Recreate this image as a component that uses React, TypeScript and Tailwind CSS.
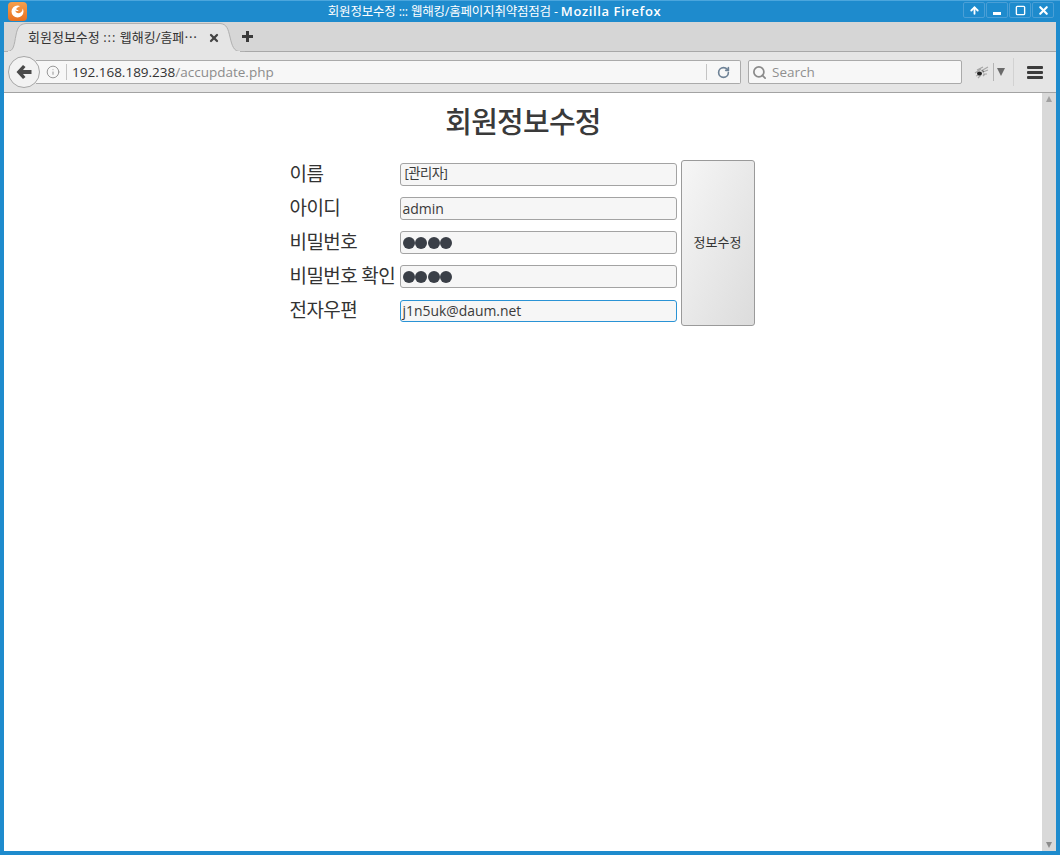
import React from 'react';
import { Info, RotateCw, Search, X, ArrowUp, Square } from 'lucide-react';

const sans = "font-['Open_Sans','Noto_Sans_CJK_KR',sans-serif]";

const fields = [
  { label: '이름', value: '[관리자]', pad: 'pl-[4px] pb-[2px] text-[13.300px] tracking-[-0.5px]' },
  { label: '아이디', value: 'admin', pad: 'pl-[2px] text-[14px]' },
  { label: '비밀번호', dots: true },
  { label: '비밀번호 확인', dots: true },
  { label: '전자우편', value: 'j1n5uk@daum.net', focus: true, pad: 'pl-[2px] text-[13.900px]' },
];

const App: React.FC = () => {
  return (
    <div className={`w-[1060px] h-[855px] flex flex-col bg-[#1e8bcd] overflow-hidden ${sans}`}>
      {/* Title bar */}
      <div className="h-[22px] flex items-center shrink-0 pl-[8px] pr-[6px] border-t border-[#4ba6dd]">
        <div className="w-[19px] h-[19px] rounded-[4px] bg-gradient-to-b from-[#f6a04c] to-[#e8701f] flex items-center justify-center">
          <svg width="15" height="15" viewBox="0 0 15 15">
            <path d="M7.500 1.500a6 6 0 1 0 6 6c0-1.200-.4-2.100-.9-2.900.1 2.400-1.500 4.500-4 4.600-1.700 0-3.100-1-3.400-2.600 1.200.8 2.800.6 3.600-.4-1.200.2-2.200-.2-2.600-1.100C7 3.700 8.800 2.500 10.300 2.300 9.500 1.800 8.600 1.500 7.500 1.500z" fill="#fff" />
          </svg>
        </div>
        <div className="flex-1 text-center text-white text-[12.500px] leading-[18px] tracking-[-0.2px] mr-[1px]">
          회원정보수정 ::: 웹해킹/홈페이지취약점점검 - <span className="text-[13px] font-semibold tracking-[0.6px]">Mozilla Firefox</span>
        </div>
        <div className="flex gap-px mt-[-3px]">
          <div className="w-[22px] h-[16px] rounded-[2px] border border-[#4a9fd6] flex items-center justify-center">
            <ArrowUp size={11} strokeWidth={4} className="text-white" />
          </div>
          <div className="w-[22px] h-[16px] rounded-[2px] border border-[#4a9fd6] flex items-end justify-center pb-[2px]">
            <div className="w-[8px] h-[3px] bg-white" />
          </div>
          <div className="w-[22px] h-[16px] rounded-[2px] border border-[#4a9fd6] flex items-center justify-center">
            <Square size={11} strokeWidth={3} className="text-white" />
          </div>
          <div className="w-[22px] h-[16px] rounded-[2px] border border-[#4a9fd6] flex items-center justify-center">
            <X size={13} strokeWidth={4} className="text-white" />
          </div>
        </div>
      </div>

      <div className="flex-1 ml-[4px] mr-[4px] mb-[4px] flex flex-col min-h-0 bg-white">
        {/* Tab strip */}
        <div className="h-[30px] bg-[#d6d6d6] shrink-0 flex items-end border-b border-[#a8a8a8]">
          <div className="relative w-[241px] h-[29px] mb-[-1px] flex items-center pl-[24px] pr-[25px] text-[13px] text-[#333]">
            <svg width="241" height="29" viewBox="0 0 241 29" className="absolute left-0 top-0">
              <path d="M0 28.500 H3 C10 28.500 10 22 12 12 C13.500 4 16 1 22 .500 H216 C223 1 224 6 226 14 C228 23 230 28.500 236 28.500 H241" fill="#e5e5e5" stroke="#b0b0b0" />
              <rect x="4" y="28" width="232" height="1" fill="#e5e5e5" />
            </svg>
            <span className="relative flex-1 whitespace-nowrap overflow-hidden">
              회원정보수정 <span className="tracking-[1px]">:::</span> 웹해킹/홈페⋯
            </span>
            <X size={12} strokeWidth={4.500} className="relative text-[#444] shrink-0" />
          </div>
          <div className="h-[29px] flex items-center ml-[-3px]">
            <svg width="11" height="11" viewBox="0 0 11 11">
              <path d="M4 0h3v4h4v3H7v4H4V7H0V4h4z" fill="#3a3a3a" />
            </svg>
          </div>
        </div>

        {/* Nav bar */}
        <div className="h-[41px] bg-[#e5e5e5] shrink-0 flex items-center border-b border-[#a3a3a3] pl-[4px] pr-[6px]">
          <div className="relative z-10 w-[32px] h-[32px] rounded-full border border-[#a6a6a6] bg-[#f2f2f2] flex items-center justify-center shrink-0">
            <svg width="16" height="14" viewBox="0 0 16 14">
              <path d="M7 0 L0.500 7 L7 14 L9.500 12 L7 9 H15.500 V5 H7 L9.500 2 Z" fill="#4a4a4a" />
            </svg>
          </div>
          <div className="ml-[-4px] w-[705px] h-[24px] bg-[#f7f7f7] border border-l-0 border-[#aaaaaa] rounded-r-[2px] flex items-center pl-[10px] text-[13.500px] shrink-0">
            <Info size={14} strokeWidth={1.500} className="text-[#8a8a8a] shrink-0" />
            <div className="w-px h-[16px] bg-[#c4c4c4] ml-[6px] mr-[5px]" />
            <span className="flex-1 text-[#333] pt-px">192.168.189.238<span className="text-[#8c8c8c]">/accupdate.php</span></span>
            <div className="w-px h-[16px] bg-[#c4c4c4]" />
            <div className="w-[33px] flex justify-center">
              <RotateCw size={13} strokeWidth={3} className="text-[#6e8296]" />
            </div>
          </div>
          <div className="ml-[7px] w-[214px] h-[24px] bg-[#f7f7f7] border border-[#aaaaaa] rounded-[2px] flex items-center pl-[3px] text-[13.500px] text-[#8f8f8f] shrink-0">
            <Search size={15} strokeWidth={2.750} className="text-[#8a8a8a]" />
            <span className="ml-[5px] pt-px">Search</span>
          </div>
          <svg width="16" height="14" viewBox="0 0 16 14" className="ml-[12px] shrink-0">
            <path d="M1 8l6-4M3 5l6-3M7 6l7-4M9 7l5-2M9 9l4 0M2 11l5-2M4 13l3-3M9 11l2-2" stroke="#a6a6a6" strokeWidth="1.200" />
            <ellipse cx="5.500" cy="8.500" rx="2.500" ry="2" fill="#222" />
            <path d="M8 5l2 1-1 2z" fill="#555" />
          </svg>
          <div className="w-px h-[18px] bg-[#b4b4b4] ml-[3px]" />
          <div className="ml-[3px] w-0 h-0 border-x-[4px] border-x-transparent border-t-[8px] border-t-[#6a6a6a]" />
          <div className="w-px h-[28px] bg-[#d2d2d2] ml-[8px]" />
          <div className="ml-[13px] w-[16px] flex flex-col gap-[2px]">
            <div className="h-[3px] bg-[#3c3c3c] rounded-[1px]" />
            <div className="h-[3px] bg-[#3c3c3c] rounded-[1px]" />
            <div className="h-[3px] bg-[#3c3c3c] rounded-[1px]" />
          </div>
        </div>

        {/* Page */}
        <div className="flex-1 flex min-h-0">
          <div className="flex-1 flex flex-col items-center text-[#3a3a3a]">
            <h1 className="text-[29px] leading-[38px] font-medium mt-[10px] tracking-[-0.8px]">회원정보수정</h1>
            <div className="flex gap-[4px] mt-[19px] mr-[2px]">
              <div className="w-[387px] flex flex-col pt-[3px] gap-[11px]">
                {fields.map((f) => (
                  <div key={f.label} className="flex items-center h-[23px]">
                    <div className="w-[110px] text-[19px] leading-[23px] tracking-[-0.6px] whitespace-nowrap mb-[1px] text-[#333]">{f.label}</div>
                    <div
                      className={`w-[277px] rounded-[3px] bg-[#f6f6f6] border flex items-center ${
                        f.focus ? 'h-[22px] mt-[1px] border-[#2a93d5]' : 'h-[23px] border-[#a3a3a3]'
                      } ${f.pad ?? 'pl-[2px]'}`}
                    >
                      {f.dots ? (
                        <div className="flex gap-[0.5px]">
                          <span className="w-[12px] h-[12px] rounded-full bg-[#3a3f47]" />
                          <span className="w-[12px] h-[12px] rounded-full bg-[#3a3f47]" />
                          <span className="w-[12px] h-[12px] rounded-full bg-[#3a3f47]" />
                          <span className="w-[12px] h-[12px] rounded-full bg-[#3a3f47]" />
                        </div>
                      ) : (
                        f.value
                      )}
                    </div>
                  </div>
                ))}
              </div>
              <button className="w-[74px] h-[166px] rounded-[3px] border border-[#9a9a9a] bg-gradient-to-br from-[#f6f6f6] to-[#dcdcdc] text-[13px] text-[#333]">
                정보수정
              </button>
            </div>
          </div>

          {/* Scrollbar */}
          <div className="w-[14px] bg-[#d9d9d9] flex flex-col items-center justify-between py-[3px] shrink-0">
            <div className="w-0 h-0 border-x-[3.500px] border-x-transparent border-b-[6px] border-b-[#a0a0a0]" />
            <div className="w-0 h-0 border-x-[3.500px] border-x-transparent border-t-[6px] border-t-[#8c8c8c]" />
          </div>
        </div>
      </div>
    </div>
  );
};

export default App;
